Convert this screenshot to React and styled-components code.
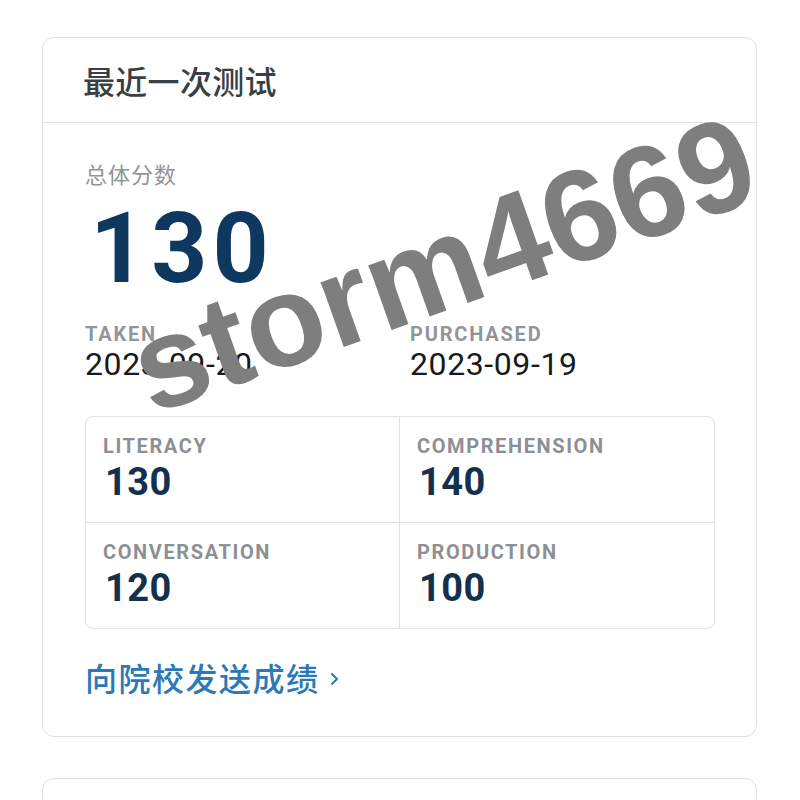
import React from "react";
import styled, { createGlobalStyle } from "styled-components";

const Global = createGlobalStyle`
  html, body { margin: 0; padding: 0; background: #ffffff; }
  body { font-family: "Roboto", "Noto Sans CJK SC", sans-serif; }
  * { box-sizing: border-box; }
`;

const Page = styled.div`
  position: relative;
  width: 800px;
  height: 800px;
  overflow: hidden;
  padding: 37px 43px 0 42px;
  display: flex;
  flex-direction: column;
  gap: 41px;
`;

const Card = styled.section`
  border: 1.5px solid #dedfe0;
  border-radius: 12px;
  background: #fff;
  flex-shrink: 0;
  ${(p) => (p.$stub ? "height: 120px;" : "")}
`;

const CardHeader = styled.header`
  height: 85px;
  border-bottom: 1.5px solid #e1e2e3;
  display: flex;
  align-items: center;
  padding-left: 40px;
`;

const Title = styled.h2`
  margin: 0;
  font-family: "Noto Sans CJK SC", sans-serif;
  font-weight: 500;
  font-size: 32px;
  color: #3a3f44;
  letter-spacing: 0.3px;
`;

const CardBody = styled.div`
  padding: 35px 41px 38px 42px;
`;

const Caption = styled.div`
  font-family: "Noto Sans CJK SC", sans-serif;
  font-size: 22px;
  line-height: 30px;
  color: #929598;
  letter-spacing: 1px;
`;

const BigScore = styled.div`
  margin-top: 12px;
  font-family: "Roboto", sans-serif;
  font-weight: 700;
  font-size: 98px;
  line-height: 98px;
  color: #0f3860;
  letter-spacing: 5px;
  padding-left: 5px;
`;

const MetaRow = styled.div`
  margin-top: 25px;
  display: grid;
  grid-template-columns: 325px 1fr;
`;

const MetaLabel = styled.div`
  font-family: "Roboto", sans-serif;
  font-weight: 700;
  font-size: 20px;
  line-height: 22px;
  color: #939598;
  letter-spacing: 1.8px;
  text-transform: uppercase;
`;

const MetaValue = styled.div`
  margin-top: 1px;
  font-family: "Roboto", sans-serif;
  font-weight: 400;
  font-size: 32px;
  line-height: 36px;
  color: #17191c;
  letter-spacing: 0.6px;
`;

const ScoreGrid = styled.div`
  margin-top: 34px;
  display: grid;
  grid-template-columns: 1fr 1fr;
  border: 1.5px solid #e1e2e3;
  border-radius: 8px;
  overflow: hidden;
`;

const Cell = styled.div`
  padding: 18px 18px 18px 17px;
  border-right: ${(p) => (p.$right ? "none" : "1.5px solid #e1e2e3")};
  border-bottom: ${(p) => (p.$bottom ? "none" : "1.5px solid #e1e2e3")};
`;

const CellLabel = styled.div`
  font-family: "Roboto", sans-serif;
  font-weight: 700;
  font-size: 20px;
  line-height: 22px;
  color: #8d9093;
  letter-spacing: 1.6px;
`;

const CellValue = styled.div`
  margin-top: 3px;
  font-family: "Roboto", sans-serif;
  font-weight: 700;
  font-size: 38px;
  line-height: 44px;
  color: #13304d;
  letter-spacing: 0.5px;
  padding-left: 2px;
`;

const Link = styled.a`
  margin-top: 27px;
  display: inline-flex;
  align-items: center;
  gap: 10px;
  font-family: "Noto Sans CJK SC", sans-serif;
  font-weight: 500;
  font-size: 32px;
  line-height: 42px;
  color: #2b79b6;
  letter-spacing: 1.5px;
  text-decoration: none;
`;

const Watermark = styled.div`
  position: absolute;
  left: 443px;
  top: 264px;
  transform: translate(-50%, -50%) rotate(-19.5deg);
  font-family: "Liberation Sans", Arial, sans-serif;
  font-weight: 700;
  font-size: 130px;
  line-height: 1;
  color: #7e7e7e;
  white-space: nowrap;
  pointer-events: none;
`;

const Chevron = () => (
  <svg width="9" height="14" viewBox="0 0 9 14" style={{ marginTop: 4 }}>
    <path d="M2 2 L7 7 L2 12" fill="none" stroke="#2b79b6" strokeWidth="2" strokeLinecap="round" strokeLinejoin="round" />
  </svg>
);

const scores = [
  { label: "LITERACY", value: 130 },
  { label: "COMPREHENSION", value: 140 },
  { label: "CONVERSATION", value: 120 },
  { label: "PRODUCTION", value: 100 },
];

export default function App() {
  return (
    <>
      <Global />
      <Page>
        <Card>
          <CardHeader>
            <Title>最近一次测试</Title>
          </CardHeader>
          <CardBody>
            <Caption>总体分数</Caption>
            <BigScore>130</BigScore>
            <MetaRow>
              <div>
                <MetaLabel>Taken</MetaLabel>
                <MetaValue>2023-09-20</MetaValue>
              </div>
              <div>
                <MetaLabel>Purchased</MetaLabel>
                <MetaValue>2023-09-19</MetaValue>
              </div>
            </MetaRow>
            <ScoreGrid>
              {scores.map((s, i) => (
                <Cell key={s.label} $right={i % 2 === 1} $bottom={i >= 2}>
                  <CellLabel>{s.label}</CellLabel>
                  <CellValue>{s.value}</CellValue>
                </Cell>
              ))}
            </ScoreGrid>
            <Link href="#">
              向院校发送成绩
              <Chevron />
            </Link>
          </CardBody>
        </Card>
        <Card $stub />
        <Watermark>storm4669</Watermark>
      </Page>
    </>
  );
}
